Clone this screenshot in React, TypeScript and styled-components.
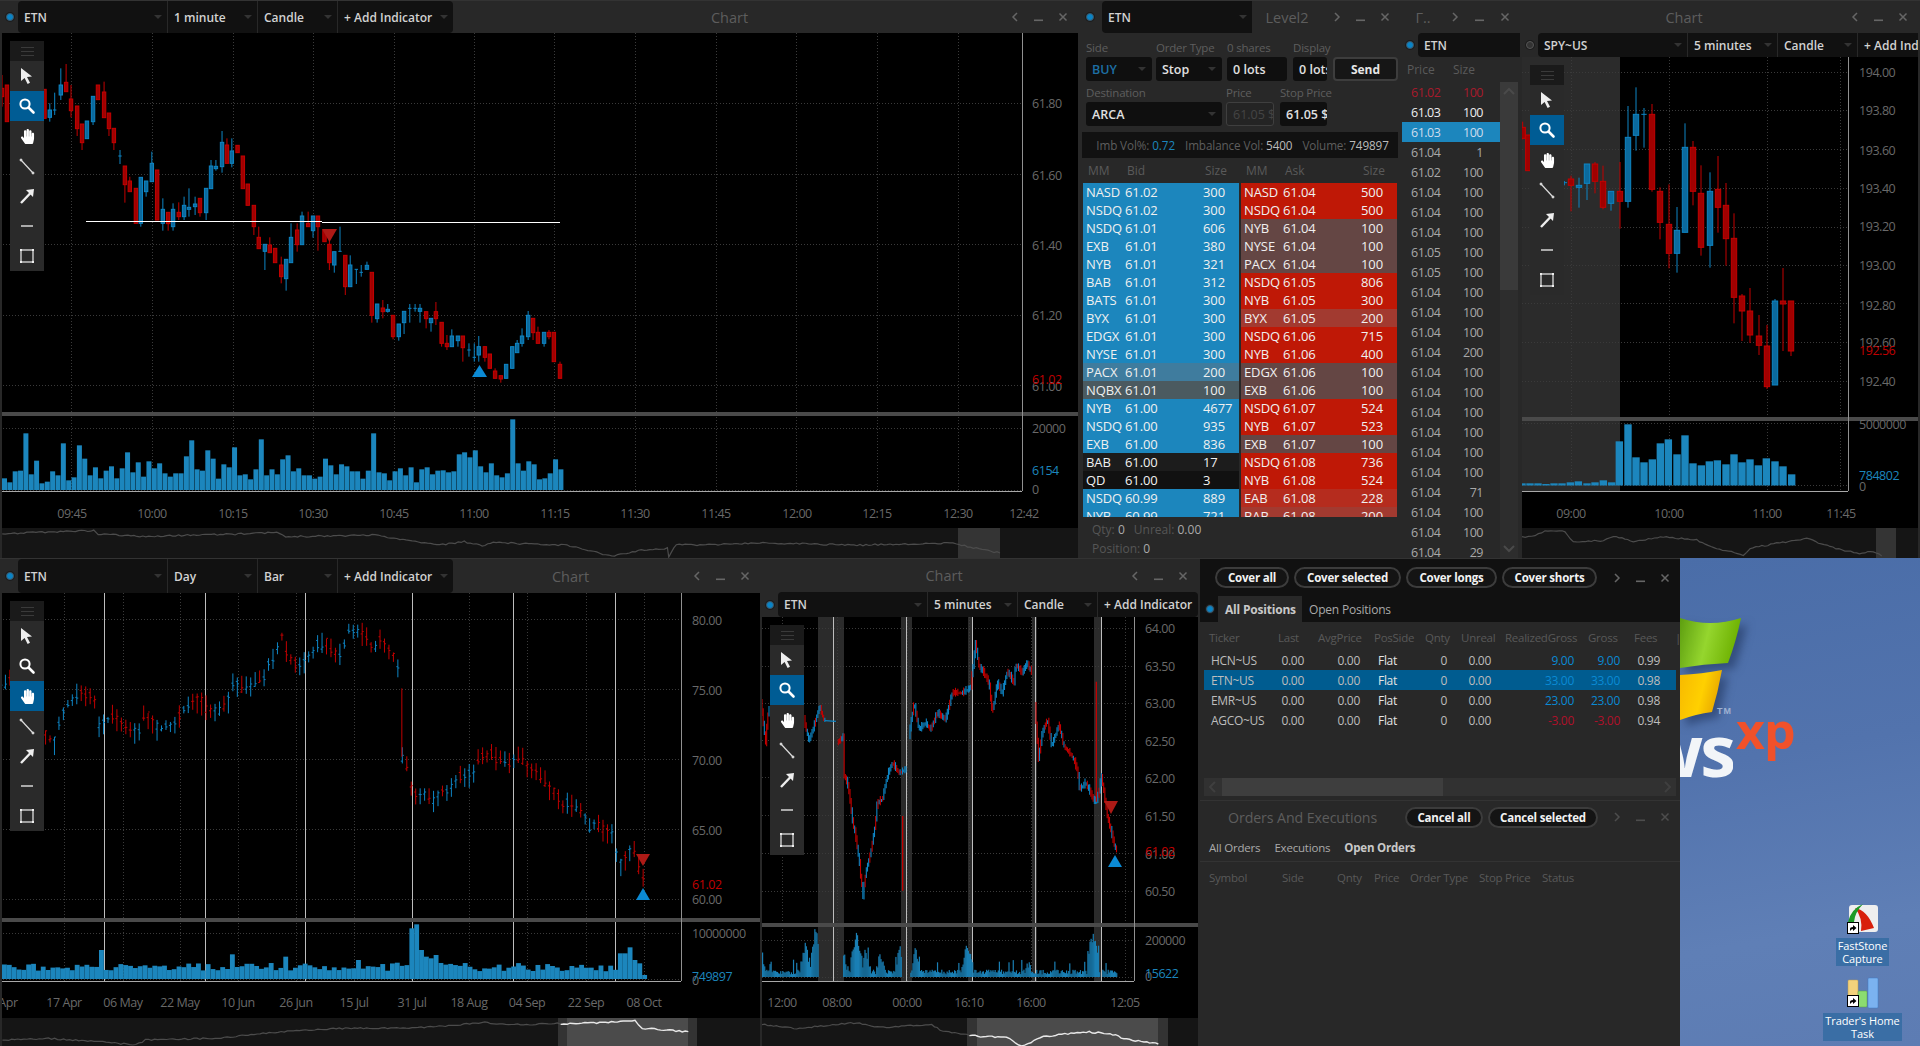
import React from "react";
import styled, { createGlobalStyle } from "styled-components";
import { FaHandPaper } from "react-icons/fa";

const BLUE = "#1c86bd";
const RED = "#bf1806";
const FONT = `"Open Sans", "Liberation Sans", sans-serif`;

const GlobalStyle = createGlobalStyle`
    html, body { margin: 0; padding: 0; background: #111; }
    body { font-family: ${FONT}; font-size: 12px; color: #ccc; }
    * { box-sizing: border-box; }
`;

/* ---------- data helpers ---------- */

const seeded = (seed: number) => () => {
    seed = (seed * 1664525 + 1013904223) % 4294967296;
    return seed / 4294967296;
};

const interp = (pts: number[][], x: number) => {
    for (let i = 1; i < pts.length; i++) {
        if (x <= pts[i][0]) {
            const [x0, y0] = pts[i - 1];
            const [x1, y1] = pts[i];
            return y0 + ((y1 - y0) * (x - x0)) / Math.max(x1 - x0, 0.001);
        }
    }
    return pts[pts.length - 1][1];
};

// adds the small noise of the navigator line
const rough = (pts: number[][]) => {
    const rnd = seeded(Math.round(pts[0][1]));
    const out: number[][] = [];
    for (let i = 1; i < pts.length; i++) {
        const [x0, y0] = pts[i - 1];
        const [x1, y1] = pts[i];
        const n = Math.max(1, Math.round(Math.abs(x1 - x0) / 3));
        for (let k = 0; k < n; k++) {
            out.push([x0 + ((x1 - x0) * k) / n, y0 + ((y1 - y0) * k) / n + (rnd() - 0.5) * 1.6]);
        }
    }
    out.push(pts[pts.length - 1]);
    return out;
};

// colour, x, body top, body bottom, wick top, wick bottom (zoomed coords)
type Candle = [string, number, number, number, number, number];

const etnCandles: Candle[] = [
    ["r", 5, 265, 290, 225, 320], ["r", 17, 255, 365, 255, 365], ["r", 109, 268, 355, 268, 355],
    ["b", 122, 330, 352, 310, 365], ["b", 134, 330, 330, 278, 345], ["b", 149, 255, 285, 205, 300],
    ["r", 162, 247, 275, 192, 275], ["r", 174, 297, 332, 255, 352], ["r", 189, 318, 386, 318, 408],
    ["r", 201, 372, 428, 372, 450], ["b", 213, 363, 416, 363, 416], ["b", 228, 289, 365, 289, 375],
    ["r", 240, 255, 299, 255, 299], ["r", 255, 276, 353, 245, 353], ["r", 267, 339, 386, 339, 408],
    ["r", 279, 385, 428, 385, 450], ["b", 294, 468, 468, 450, 492], ["r", 306, 498, 554, 498, 608],
    ["r", 318, 543, 575, 530, 575], ["r", 333, 565, 670, 565, 670], ["b", 345, 532, 670, 532, 680],
    ["b", 358, 543, 575, 543, 590], ["b", 372, 490, 545, 455, 545], ["r", 385, 510, 660, 510, 660],
    ["b", 399, 628, 670, 595, 692], ["r", 412, 637, 671, 637, 692], ["b", 424, 628, 680, 610, 692],
    ["r", 438, 637, 650, 607, 660], ["b", 451, 616, 650, 590, 660], ["b", 463, 622, 628, 565, 650],
    ["b", 478, 612, 620, 590, 645], ["r", 490, 595, 638, 595, 650], ["b", 505, 565, 638, 565, 660],
    ["b", 517, 498, 566, 480, 566], ["b", 529, 499, 506, 480, 512], ["b", 544, 427, 500, 393, 518],
    ["r", 556, 435, 490, 415, 490], ["b", 568, 453, 490, 415, 502], ["r", 582, 436, 458, 436, 458],
    ["r", 595, 468, 566, 468, 566], ["r", 607, 552, 616, 552, 616], ["r", 622, 616, 680, 616, 705],
    ["r", 634, 712, 746, 680, 746], ["b", 649, 733, 754, 733, 810], ["r", 661, 735, 758, 712, 758],
    ["r", 674, 745, 788, 745, 788], ["r", 689, 795, 830, 770, 850], ["b", 701, 778, 836, 778, 872],
    ["b", 713, 712, 788, 670, 788], ["r", 728, 690, 734, 670, 755], ["b", 740, 648, 734, 635, 734],
    ["r", 755, 670, 680, 635, 680], ["b", 767, 648, 692, 648, 713], ["r", 779, 648, 680, 648, 752],
    ["r", 795, 690, 725, 690, 725], ["r", 807, 733, 788, 690, 810], ["b", 819, 755, 795, 755, 818],
    ["b", 833, 754, 754, 680, 755], ["r", 846, 766, 860, 766, 885], ["b", 858, 795, 860, 766, 860],
    ["b", 873, 808, 808, 808, 852], ["b", 885, 817, 817, 795, 830], ["b", 899, 796, 808, 785, 808],
    ["r", 911, 817, 946, 817, 968], ["b", 924, 912, 956, 912, 968], ["r", 938, 924, 935, 900, 955],
    ["b", 950, 928, 934, 912, 938], ["r", 963, 946, 1010, 946, 1018], ["b", 977, 972, 1010, 972, 1022],
    ["b", 990, 934, 968, 934, 1002], ["b", 1004, 925, 925, 912, 968], ["b", 1017, 925, 925, 912, 935],
    ["b", 1029, 925, 934, 912, 968], ["r", 1044, 935, 956, 935, 985], ["b", 1056, 955, 968, 955, 995],
    ["r", 1068, 935, 956, 906, 975], ["r", 1082, 967, 1030, 967, 1040], ["r", 1095, 1030, 1040, 1005, 1050],
    ["b", 1107, 1008, 1040, 988, 1040], ["b", 1122, 1008, 1022, 1008, 1040], ["r", 1134, 1008, 1043, 1008, 1085],
    ["b", 1149, 1050, 1050, 1030, 1070], ["b", 1162, 1072, 1072, 1030, 1085], ["b", 1173, 1040, 1065, 1008, 1085],
    ["r", 1188, 1040, 1072, 1040, 1085], ["r", 1200, 1062, 1105, 1062, 1105], ["r", 1213, 1113, 1135, 1105, 1135],
    ["r", 1227, 1127, 1137, 1127, 1148], ["b", 1240, 1093, 1135, 1093, 1135], ["b", 1255, 1040, 1105, 1040, 1105],
    ["b", 1267, 1030, 1058, 1020, 1058], ["b", 1279, 1008, 1030, 985, 1040], ["b", 1294, 946, 1010, 933, 1020],
    ["r", 1306, 955, 998, 955, 1020], ["r", 1318, 997, 1030, 980, 1030], ["b", 1333, 997, 1030, 997, 1040],
    ["r", 1345, 997, 1010, 990, 1018], ["r", 1357, 997, 1085, 997, 1085], ["r", 1372, 1093, 1135, 1085, 1135],
];

const etnVolume = [
    235, 247, 214, 212, 100, 223, 182, 250, 245, 214, 226, 130, 241, 232, 136, 176, 226, 202, 235, 212, 199, 235, 205,
    157, 217, 187, 230, 184, 205, 190, 220, 230, 220, 220, 169, 121, 208, 212, 151, 176, 236, 193, 202, 142, 226, 223,
    238, 208, 118, 226, 208, 223, 178, 166, 214, 205, 226, 226, 236, 230, 176, 196, 223, 193, 199, 214, 214, 236, 212,
    100, 217, 220, 241, 214, 205, 226, 202, 247, 208, 202, 223, 212, 211, 217, 214, 163, 157, 172, 151, 199, 217, 190,
    226, 232, 220, 58, 190, 212, 184, 193, 238, 235, 220, 178, 208,
];

const spyCandles: Candle[] = [
    ["r", 38, 382, 415, 365, 418], ["r", 55, 405, 512, 405, 512], ["b", 163, 548, 548, 543, 556],
    ["r", 183, 537, 556, 527, 634], ["b", 207, 556, 562, 533, 623], ["b", 231, 492, 550, 492, 600],
    ["r", 255, 492, 544, 486, 580], ["r", 279, 544, 622, 497, 628], ["b", 303, 574, 610, 574, 632],
    ["r", 330, 574, 604, 486, 686], ["b", 354, 412, 604, 318, 623], ["b", 378, 343, 406, 262, 452],
    ["b", 402, 343, 343, 324, 443], ["r", 426, 343, 568, 312, 575], ["r", 450, 574, 667, 562, 718],
    ["r", 477, 673, 760, 553, 805], ["b", 501, 691, 760, 621, 818], ["b", 525, 442, 697, 370, 697],
    ["r", 549, 442, 574, 423, 616], ["r", 573, 580, 742, 496, 767], ["b", 600, 574, 736, 517, 803],
    ["r", 624, 568, 622, 468, 698], ["r", 648, 616, 716, 549, 797], ["r", 672, 715, 892, 640, 970],
    ["r", 696, 888, 933, 882, 1023], ["r", 720, 933, 1005, 864, 1029], ["r", 747, 1008, 1036, 945, 1065],
    ["r", 771, 1038, 1160, 975, 1167], ["b", 795, 903, 1155, 897, 1155], ["r", 819, 903, 912, 804, 1053],
    ["r", 843, 903, 1053, 903, 1068],
];

const spyVolume = [
    [36, 610], [60, 610], [84, 610], [108, 612], [132, 610], [156, 610], [181, 607], [205, 604], [231, 610], [255, 607],
    [280, 601], [305, 607], [328, 484], [354, 433], [378, 532], [402, 547], [427, 538], [451, 490], [475, 478],
    [501, 523], [525, 466], [549, 550], [574, 556], [598, 544], [622, 541], [648, 553], [672, 523], [696, 547],
    [720, 538], [745, 556], [769, 535], [795, 544], [819, 559], [845, 583],
];

const dayPath = [
    [0, 385], [10, 380], [20, 360], [60, 430], [95, 530], [115, 550], [122, 490], [135, 440], [155, 410], [175, 400],
    [195, 420], [205, 510], [215, 490], [232, 470], [250, 495], [270, 510], [285, 530], [295, 470], [310, 470],
    [325, 510], [345, 500], [360, 500], [375, 460], [395, 420], [410, 425], [430, 450], [450, 455], [470, 430],
    [482, 370], [500, 385], [520, 375], [545, 350], [560, 300], [570, 280], [580, 220], [590, 270], [600, 300],
    [612, 315], [625, 310], [640, 285], [655, 260], [672, 250], [690, 280], [705, 285], [720, 210], [735, 210],
    [750, 225], [770, 270], [785, 245], [800, 270], [818, 300], [828, 385], [829, 590], [840, 620], [850, 690],
    [860, 710], [880, 700], [895, 730], [915, 690], [930, 680], [945, 650], [960, 660], [975, 640], [988, 600],
    [1000, 585], [1020, 590], [1040, 610], [1060, 600], [1075, 590], [1090, 625], [1105, 640], [1125, 670],
    [1145, 700], [1160, 735], [1180, 735], [1205, 760], [1215, 810], [1230, 790], [1250, 815], [1266, 815],
    [1272, 880], [1285, 925], [1295, 885], [1307, 870], [1320, 935], [1328, 965],
];

const fiveMinPaths = [
    [[36, 430], [50, 550], [58, 450]],
    [[165, 480], [180, 545], [195, 500], [212, 440], [225, 482]],
    [[265, 550], [285, 530], [283, 640], [298, 680], [310, 780], [320, 830], [330, 900], [342, 1010], [350, 940],
        [365, 880], [378, 800], [385, 730], [400, 720], [415, 650], [430, 610], [450, 640], [470, 630]],
    [[480, 530], [495, 430], [510, 510], [530, 490], [545, 510], [565, 460], [590, 480], [610, 400], [640, 400],
        [665, 385], [680, 250], [690, 320], [705, 340], [720, 370], [730, 460], [745, 370], [760, 400], [775, 335],
        [795, 370], [800, 315], [820, 340], [835, 310], [845, 335]],
    [[858, 430], [868, 600], [880, 520], [895, 480], [908, 560], [930, 495], [945, 560], [970, 590], [985, 630],
        [992, 690], [1010, 670], [1025, 700], [1035, 725], [1045, 720], [1058, 650], [1065, 700], [1075, 770],
        [1085, 810], [1100, 870]],
];

const path = (pts: number[][]) => pts.map(p => p.join(",")).join(" ");

/* ---------- chart drawing ---------- */

const Candles = ({ items, fx, fy, w }: { items: Candle[]; fx: (x: number) => number; fy: (y: number) => number; w: number }) => (
    <>
        {items.map(([c, x, t, b, wt, wb], i) => {
            const stroke = c === "r" ? "#c40000" : "#0e85c4";
            const fill = c === "r" ? "#a00000" : "#0b6a9e";
            const cx = fx(x);
            return (
                <g key={i}>
                    <line x1={cx} x2={cx} y1={fy(wt)} y2={fy(wb)} stroke={stroke} strokeWidth={1} />
                    {t === b ? (
                        <line x1={cx - w / 2} x2={cx + w / 2} y1={fy(t)} y2={fy(t)} stroke={stroke} strokeWidth={1} />
                    ) : (
                        <rect x={cx - w / 2} y={fy(t)} width={w} height={fy(b) - fy(t)} fill={fill} stroke={stroke} strokeWidth={1} />
                    )}
                </g>
            );
        })}
    </>
);

const Tri = ({ x, y, w, h, down }: { x: number; y: number; w: number; h: number; down?: boolean }) => (
    <polygon
        points={down ? `${x},${y} ${x + w},${y} ${x + w / 2},${y + h}` : `${x + w / 2},${y} ${x + w},${y + h} ${x},${y + h}`}
        fill={down ? "#ad1a16" : "#0b8ad4"}
    />
);

const PlotSvg = styled.svg`
    display: block;
    width: 100%;
    height: 100%;
    background: #000;

    text {
        font-family: ${FONT};
        font-size: 12.5px;
        letter-spacing: -0.45px;
        fill: #696969;
    }
`;

type Label = [number, number, string, string?];

interface PlotProps {
    box: [number, number, number, number];
    gridX: number[];
    gridY: number[];
    frameRight: number;
    divider: number;
    labels: Label[];
    times: [number, string][];
    nav: number[][];
    navSel?: [number, number];
    navGrey?: [number, number];
    navHandle?: number;
    bands?: [number, number][];
    marks?: number[];
    children?: React.ReactNode;
}

const Plot = ({ box, gridX, gridY, frameRight, divider, labels, times, nav, navSel, navGrey, navHandle = 9, bands, marks, children }: PlotProps) => {
    const [x, y, w, h] = box;
    const frameBottom = y > 500 ? 981 : 491;
    const navTop = frameBottom + 37;
    const line = rough(nav);
    return (
        <PlotSvg viewBox={`${x} ${y} ${w} ${h}`} preserveAspectRatio="none">
            {bands?.map(([a, b]) => <rect key={a} x={a} y={y} width={b - a} height={frameBottom - y} fill="#2b2b2b" />)}
            {gridX.map(g => <line key={g} x1={g + 0.5} x2={g + 0.5} y1={y} y2={frameBottom} stroke="#3a3a3a" strokeDasharray="1 2" />)}
            {gridY.map(g => <line key={g} x1={x} x2={frameRight} y1={g + 0.5} y2={g + 0.5} stroke="#3a3a3a" strokeDasharray="1 2" />)}
            {marks?.map(m => <line key={m} x1={m + 0.5} x2={m + 0.5} y1={y} y2={frameBottom} stroke="#bdbdbd" />)}
            {children}
            <rect x={x} y={divider - 2} width={w} height={4} fill="#4a4a4a" />
            <line x1={frameRight + 0.5} x2={frameRight + 0.5} y1={y} y2={frameBottom} stroke="#909090" />
            <line x1={x} x2={frameRight} y1={frameBottom + 0.5} y2={frameBottom + 0.5} stroke="#a8a8a8" />
            {labels.map(([lx, ly, t, c], i) => (
                <text key={i} x={lx} y={ly + 4.5} style={c ? { fill: c } : undefined}>{t}</text>
            ))}
            {times.map(([tx, t]) => (
                <text key={t} x={tx} y={y > 500 ? 1007 : 517.5} textAnchor="middle">{t}</text>
            ))}
            <rect x={x} y={navTop} width={w} height={30} fill="#151515" />
            {navGrey && <rect x={navGrey[0]} y={navTop} width={navGrey[1] - navGrey[0]} height={30} fill="#343434" />}
            {navSel && <rect x={navSel[0]} y={navTop} width={navSel[1] - navSel[0]} height={30} fill="#4b4b4b" />}
            {navSel && <rect x={navSel[0]} y={navTop} width={navHandle} height={30} fill="#333" />}
            {navSel && <rect x={navSel[1] - navHandle} y={navTop} width={navHandle} height={30} fill="#333" />}
            <polyline points={path(line)} fill="none" stroke="#4c4c4c" strokeWidth={1.2} />
            {navSel && (
                <polyline
                    points={path(line.filter(p => p[0] >= navSel[0] && p[0] <= navSel[1]))}
                    fill="none"
                    stroke="#e8e8e8"
                    strokeWidth={1.4}
                />
            )}
            {x === 0 && <rect x={0} y={y} width={2} height={h} fill="#282828" />}
        </PlotSvg>
    );
};

const Chart1 = () => {
    const fx = (z: number) => z / 2.45;
    const fy = (z: number) => z / 3;
    const nav = [
        [5, 402], [60, 398], [210, 392], [220, 402], [320, 410], [420, 405], [520, 403], [620, 397], [640, 410], [840, 405],
        [875, 415], [985, 435], [1040, 425], [1080, 438], [1105, 428], [1270, 435], [1370, 468], [1430, 452], [1495, 445],
        [1498, 470], [1515, 432], [1568, 435],
    ].map(([a, b]) => [a / 2.24, 400 + b / 3]);
    nav.push([760, 543], [860, 545], [950, 543], [985, 550], [1000, 553]);
    return (
        <Plot
            box={[0, 33, 1078, 525]}
            gridX={[71, 152, 233, 313, 394, 474, 554, 635, 716, 796, 877, 958]}
            gridY={[103, 174, 244, 315, 385, 428, 490]}
            frameRight={1022}
            divider={414}
            nav={nav}
            navGrey={[958, 1000]}
            labels={[
                [1032, 103, "61.80"], [1032, 175, "61.60"], [1032, 245, "61.40"], [1032, 315, "61.20"], [1032, 386, "61.00"],
                [1032, 379, "61.02", "#c00000"], [1032, 428, "20000"], [1032, 470, "6154", BLUE], [1032, 489, "0"],
            ]}
            times={[
                [72, "09:45"], [152, "10:00"], [233, "10:15"], [313, "10:30"], [394, "10:45"], [474, "11:00"], [555, "11:15"],
                [635, "11:30"], [716, "11:45"], [797, "12:00"], [877, "12:15"], [958, "12:30"], [1024, "12:42"],
            ]}
        >
            <Candles items={etnCandles} fx={fx} fy={fy} w={3.4} />
            <line x1={86} x2={322} y1={221.5} y2={221.5} stroke="#fff" strokeWidth={1.2} />
            <line x1={322} x2={560} y1={222.5} y2={222.5} stroke="#fff" strokeWidth={1.2} />
            <Tri x={322} y={229} w={15} h={13} down />
            <Tri x={472} y={365} w={15} h={12} />
            {etnVolume.map((t, i) => (
                <rect key={i} x={2 + i * 5.35} y={400 + t / 3} width={5} height={490 - 400 - t / 3} fill={BLUE} />
            ))}
        </Plot>
    );
};

const Chart2 = () => {
    const rnd = seeded(11);
    const fx = (z: number) => z / 2.063;
    const fy = (z: number) => 560 + z / 3;
    const bars: React.ReactNode[] = [];
    for (let z = 2; z <= 1328; z += 9.2) {
        const mid = interp(dayPath, z);
        const next = interp(dayPath, z + 9);
        const c = next < mid ? "#0e85c4" : "#c00000";
        const up = 8 + rnd() * 30;
        const dn = 8 + rnd() * 30;
        const open = mid - up * 0.6 + rnd() * up;
        const close = mid - dn * 0.6 + rnd() * dn;
        const x = fx(z);
        bars.push(
            <g key={z} stroke={rnd() > 0.82 ? (c === "#c00000" ? "#0e85c4" : "#c00000") : c} strokeWidth={1}>
                <line x1={x} x2={x} y1={fy(mid - up)} y2={fy(mid + dn)} />
                <line x1={x - 1.5} x2={x} y1={fy(open)} y2={fy(open)} />
                <line x1={x} x2={x + 1.5} y1={fy(close)} y2={fy(close)} />
            </g>
        );
    }
    const spikes: Record<number, number> = { 20: 1170, 47: 1183, 58: 1190, 73: 1200, 84: 1105, 85: 1093, 86: 1170, 87: 1190, 88: 1195, 89: 1185, 127: 1180, 128: 1180, 129: 1162, 130: 1200, 131: 1210, 132: 1245 };
    const vols: React.ReactNode[] = [];
    for (let i = 0; i <= 132; i++) {
        const t = spikes[i] ?? 1208 + rnd() * 26;
        vols.push(<rect key={i} x={2 + i * 4.85} y={fy(t)} width={4.85} height={979 - fy(t)} fill={BLUE} />);
    }
    const nav = [
        [5, 1440], [100, 1435], [200, 1445], [280, 1455], [300, 1440], [450, 1435], [580, 1415], [700, 1405], [850, 1405],
        [1000, 1388], [1080, 1395], [1150, 1390], [1170, 1392], [1310, 1383], [1325, 1405], [1420, 1415],
    ].map(([a, b]) => [fx(a), fy(b)]);
    return (
        <Plot
            box={[0, 593, 760, 453]}
            gridX={[64, 123, 180, 238, 296, 354, 412, 469, 527, 586, 644]}
            gridY={[619, 689, 759, 829, 899, 933, 979]}
            marks={[104, 205, 305, 412, 513, 615]}
            frameRight={681}
            divider={920}
            nav={nav}
            navSel={[558, 697]}
            labels={[
                [692, 620, "80.00"], [692, 690, "75.00"], [692, 760, "70.00"], [692, 830, "65.00"], [692, 899, "60.00"],
                [692, 884, "61.02", "#c00000"], [692, 933, "10000000"], [692, 980, "0"], [692, 976, "749897", BLUE],
            ]}
            times={[
                [8, "Apr"], [64, "17 Apr"], [123, "06 May"], [180, "22 May"], [238, "10 Jun"], [296, "26 Jun"], [354, "15 Jul"],
                [412, "31 Jul"], [469, "18 Aug"], [527, "04 Sep"], [586, "22 Sep"], [644, "08 Oct"],
            ]}
        >
            {bars}
            <line x1={fx(829)} x2={fx(829)} y1={fy(385)} y2={fy(590)} stroke="#c00000" />
            <Tri x={636} y={854} w={14} h={12} down />
            <Tri x={636} y={888} w={14} h={12} />
            {vols}
        </Plot>
    );
};

const Chart3 = () => {
    const rnd = seeded(5);
    const fx = (z: number) => 750 + z / 3;
    const fy = (z: number) => 560 + z / 3;
    const ticks: React.ReactNode[] = [];
    fiveMinPaths.forEach((seg, s) => {
        for (let z = seg[0][0]; z <= seg[seg.length - 1][0]; z += 3.5) {
            const a = interp(seg, z);
            const b = interp(seg, z + 3.5);
            const blue = b < a ? rnd() > 0.2 : rnd() > 0.7;
            const j = 3 + rnd() * 14;
            ticks.push(
                <line key={`${s}-${z}`} x1={fx(z)} x2={fx(z)} y1={fy(Math.min(a, b) - j)} y2={fy(Math.max(a, b) + j * 0.6)} stroke={blue ? "#0e85c4" : "#c40000"} strokeWidth={1.1} />
            );
        }
    });
    const peaks = [[36, 1175], [165, 1145], [198, 1105], [280, 1170], [318, 1110], [345, 1160], [390, 1165], [448, 1155], [495, 1160], [650, 1140], [835, 1185], [1027, 1110], [1095, 1222]];
    const vols: React.ReactNode[] = [];
    for (let z = 36; z <= 1100; z += 3.2) {
        if ((z > 204 && z < 276) || (z > 453 && z < 480) || (z > 1048 && z < 1054)) continue;
        let t = 1243 - rnd() * 14;
        peaks.forEach(([p, v]) => {
            const d = Math.abs(p - z);
            if (d < 18) t = Math.min(t, v + d * 4 + rnd() * 30);
        });
        if (rnd() > 0.95) t -= 30;
        vols.push(<rect key={z} x={fx(z)} y={fy(t)} width={1.2} height={977 - fy(t)} fill="#1a7fb4" />);
    }
    const nav = [
        [36, 1393], [140, 1405], [320, 1388], [400, 1403], [545, 1393], [570, 1410], [650, 1425], [700, 1430], [770, 1432],
        [815, 1458], [880, 1430], [1000, 1415], [1080, 1420], [1130, 1438], [1225, 1452],
    ].map(([a, b]) => [fx(a), fy(b)]);
    return (
        <Plot
            box={[762, 617, 436, 429]}
            gridX={[782, 837, 907, 969, 1031, 1125]}
            gridY={[628, 666, 703, 740, 777, 815, 853, 891, 940, 977]}
            bands={[[818, 844], [901, 912], [968, 973], [1032, 1037], [1094, 1102]]}
            marks={[833, 906, 972, 1035, 1101]}
            frameRight={1134}
            divider={925}
            nav={nav}
            navSel={[967, 1168]}
            navHandle={10}
            labels={[
                [1145, 628, "64.00"], [1145, 666, "63.50"], [1145, 703, "63.00"], [1145, 741, "62.50"], [1145, 778, "62.00"],
                [1145, 816, "61.50"], [1145, 854, "61.00"], [1145, 851, "61.02", "#c00000"], [1145, 891, "60.50"],
                [1145, 940, "200000"], [1145, 976, "0"], [1145, 973, "15622", BLUE],
            ]}
            times={[[782, "12:00"], [837, "08:00"], [907, "00:00"], [969, "16:10"], [1031, "16:00"], [1125, "12:05"]]}
        >
            {ticks}
            <line x1={fx(458)} x2={fx(458)} y1={fy(768)} y2={fy(992)} stroke="#c40000" strokeWidth={1.3} />
            <line x1={fx(1039)} x2={fx(1039)} y1={fy(365)} y2={fy(725)} stroke="#c40000" strokeWidth={1.3} />
            <line x1={fx(225)} x2={fx(258)} y1={fy(482)} y2={fy(484)} stroke="#0e85c4" strokeWidth={1.2} />
            <Tri x={1104} y={801} w={14} h={13} down />
            <Tri x={1108} y={855} w={14} h={12} />
            {vols}
        </Plot>
    );
};

const Chart4 = () => {
    const fx = (z: number) => 1510 + z / 3;
    const fy = (z: number) => z / 3;
    const nav = [
        [36, 770], [75, 768], [105, 752], [165, 755], [190, 785], [280, 782], [310, 768], [370, 785], [460, 770], [560, 780],
        [620, 805], [700, 825], [720, 805], [800, 790], [890, 775], [960, 800], [1040, 820], [1090, 815], [1115, 828],
    ].map(([a, b]) => [fx(a), 280 + b / 3]);
    return (
        <Plot
            box={[1522, 57, 396, 501]}
            gridX={[1571, 1669, 1767, 1840]}
            gridY={[72, 110, 149, 188, 227, 265, 303, 342, 381, 423, 485]}
            bands={[[1522, 1620]]}
            frameRight={1848}
            divider={419}
            nav={nav}
            navGrey={[1876, 1896]}
            labels={[
                [1859, 72, "194.00"], [1859, 110, "193.80"], [1859, 150, "193.60"], [1859, 188, "193.40"], [1859, 226, "193.20"],
                [1859, 265, "193.00"], [1859, 305, "192.80"], [1859, 342, "192.60"], [1859, 350, "192.56", "#c00000"], [1859, 381, "192.40"],
                [1859, 424, "5000000"], [1859, 475, "784802", BLUE], [1859, 486, "0"],
            ]}
            times={[[1571, "09:00"], [1669, "10:00"], [1767, "11:00"], [1841, "11:45"]]}
        >
            <Candles items={spyCandles} fx={fx} fy={fy} w={5.4} />
            {spyVolume.map(([z, t]) => {
                const top = 280 + t / 3;
                return <rect key={z} x={fx(z) - 3.7} y={top} width={7.4} height={485.5 - top} fill={BLUE} />;
            })}
        </Plot>
    );
};

/* ---------- chrome ---------- */

const Page = styled.div`
    width: 1920px;
    height: 1046px;
    display: flex;
    flex-direction: column;
    overflow: hidden;
    background: #111;
`;

const Row = styled.div<{ $h: number }>`
    display: flex;
    height: ${p => p.$h}px;
`;

const Win = styled.section<{ $w: number; $pad?: number }>`
    width: ${p => p.$w}px;
    height: 100%;
    display: flex;
    flex-direction: column;
    background: #282828;
    border-top: 1px solid #333;
    padding: 0 ${p => p.$pad ?? 0}px;
    overflow: hidden;
`;

const TitleBar = styled.div<{ $h?: number }>`
    height: ${p => p.$h ?? 32}px;
    flex: none;
    display: flex;
    align-items: center;
`;

const Dot = styled.span<{ $off?: boolean; $ml?: number; $mr?: number }>`
    flex: none;
    align-self: center;
    width: 8px;
    height: 8px;
    margin: 0 ${p => p.$mr ?? 4}px 0 ${p => p.$ml ?? 6}px;
    border-radius: 50%;
    border: 1.5px solid ${p => (p.$off ? "#555" : "#3c5566")};
    background: ${p => (p.$off ? "#333" : "#0a84c6")};
    box-shadow: 0 0 0 1px #1c1c1c;
`;

const PillGroup = styled.div<{ $clip?: boolean }>`
    display: flex;
    height: 100%;
    gap: 1px;
    flex: ${p => (p.$clip ? 1 : "none")};
    overflow: hidden;
`;

const Pill = styled.div<{ $w: number; $first?: boolean; $last?: boolean; $bare?: boolean }>`
    width: ${p => p.$w}px;
    flex: none;
    display: flex;
    align-items: center;
    justify-content: space-between;
    padding: 0 5px 0 6px;
    background: #111;
    color: #d2d2d2;
    font-weight: 600;
    font-size: 12px;
    white-space: nowrap;
    overflow: hidden;
    border-radius: ${p => (p.$first ? "4px 0 0 4px" : p.$last ? "0 4px 4px 0" : "0")};

    ${p => !p.$bare && `
        &::after {
            content: "";
            flex: none;
            border-left: 4px solid transparent;
            border-right: 4px solid transparent;
            border-top: 4px solid #333;
        }
    `}
`;

const Title = styled.div<{ $shift?: number }>`
    flex: 1;
    padding-right: ${p => p.$shift ?? 0}px;
    text-align: center;
    color: #5d5d5d;
    font-size: 14.5px;
    white-space: nowrap;
`;

const Controls = styled.div<{ $w: number; $dim?: boolean }>`
    flex: none;
    width: ${p => p.$w}px;
    display: flex;
    align-items: center;
    justify-content: space-between;
    padding: 0 10px 0 5px;
    color: ${p => (p.$dim ? "#4d4d4d" : "#666")};
`;

const WinControls = ({ dir = "left", w = 72, dim }: { dir?: "left" | "right"; w?: number; dim?: boolean }) => (
    <Controls $w={w} $dim={dim}>
        <svg width="8" height="10" viewBox="0 0 8 10" fill="none" stroke="currentColor" strokeWidth="1.5">
            <path d={dir === "left" ? "M6 1 L2 5 L6 9" : "M2 1 L6 5 L2 9"} />
        </svg>
        <svg width="9" height="10" viewBox="0 0 9 10" fill="currentColor"><rect x="0" y="7.5" width="9" height="1.6" /></svg>
        <svg width="10" height="10" viewBox="0 0 10 10" stroke="currentColor" strokeWidth="1.5"><path d="M1.5 1.5 L8.5 8.5 M8.5 1.5 L1.5 8.5" /></svg>
    </Controls>
);

const Body = styled.div`
    flex: 1;
    position: relative;
    min-height: 0;
`;

const ToolBox = styled.div<{ $left: number }>`
    position: absolute;
    top: 8px;
    left: ${p => p.$left}px;
    width: 34px;
    background: #2a2a2a;
`;

const ToolHandle = styled.div`
    height: 20px;
    background: #1a1a1a;
    display: flex;
    align-items: center;
    justify-content: center;

    &::before {
        content: "";
        width: 13px;
        height: 7px;
        border-top: 1px solid #3a3a3a;
        border-bottom: 1px solid #3a3a3a;
        background: linear-gradient(#3a3a3a, #3a3a3a) center / 100% 1px no-repeat;
    }
`;

const ToolBtn = styled.div<{ $on?: boolean }>`
    height: 30px;
    display: flex;
    align-items: center;
    justify-content: center;
    background: ${p => (p.$on ? "#005c94" : "transparent")};
    color: #fff;
`;

const toolIcons = [
    <svg key="a" width="16" height="18" viewBox="0 0 16 18" fill="#eee"><path d="M2 1 L2 14 L5.6 11 L8.6 17 L11 15.8 L8 10 L13 9.6 Z" /></svg>,
    <svg key="s" width="18" height="18" viewBox="0 0 18 18" fill="none" stroke="#fff"><circle cx="7" cy="7" r="4.6" strokeWidth="2" /><path d="M10.5 10.5 L15.5 15.5" strokeWidth="2.6" strokeLinecap="round" /></svg>,
    <FaHandPaper key="h" size={15} color="#fff" />,
    <svg key="l" width="18" height="18" viewBox="0 0 18 18" stroke="#ddd" fill="#ddd"><path d="M3 3 L15 16" strokeWidth="1.2" /><circle cx="3" cy="3" r="1" /><circle cx="15" cy="16" r="1" /></svg>,
    <svg key="r" width="18" height="18" viewBox="0 0 18 18" fill="#eee"><path d="M3 16 L13 5.5" stroke="#eee" strokeWidth="2.4" /><path d="M8 3 L16 2 L15 10 Z" /></svg>,
    <svg key="m" width="18" height="6" viewBox="0 0 18 6"><rect x="3" y="2" width="12" height="2" fill="#aaa" /></svg>,
    <svg key="q" width="18" height="18" viewBox="0 0 18 18" fill="#eee"><rect x="3" y="3" width="12" height="12" fill="none" stroke="#eee" strokeWidth="1.2" /><rect x="2" y="2" width="2" height="2" /><rect x="14" y="2" width="2" height="2" /><rect x="2" y="14" width="2" height="2" /><rect x="14" y="14" width="2" height="2" /></svg>,
];

const Toolbar = ({ active, left }: { active: number; left: number }) => (
    <ToolBox $left={left}>
        <ToolHandle />
        {toolIcons.map((icon, i) => <ToolBtn key={i} $on={i === active}>{icon}</ToolBtn>)}
    </ToolBox>
);

const Pills = ({ items, widths, clip, bareLast }: { items: string[]; widths: number[]; clip?: boolean; bareLast?: boolean }) => (
    <PillGroup $clip={clip}>
        {items.map((t, i) => (
            <Pill key={t} $w={widths[i]} $first={i === 0} $last={i === items.length - 1} $bare={bareLast && i === items.length - 1}>{t}</Pill>
        ))}
    </PillGroup>
);

/* ---------- level 2 ---------- */

const Form = styled.div`
    flex: none;
    padding: 6px 0 0 8px;
`;

const FormRow = styled.div<{ $mt?: number }>`
    display: flex;
    margin-top: ${p => p.$mt ?? 0}px;
`;

const Field = styled.div<{ $w: number; $mr?: number }>`
    width: ${p => p.$w}px;
    margin-right: ${p => p.$mr ?? 0}px;
    flex: none;
`;

const FieldLabel = styled.div`
    height: 18px;
    line-height: 18px;
    font-size: 11.5px;
    letter-spacing: -0.2px;
    color: #5e5e5e;
    white-space: nowrap;
`;

const Control = styled.div<{ $color?: string; $off?: boolean; $caret?: boolean }>`
    height: 24px;
    display: flex;
    align-items: center;
    justify-content: space-between;
    padding: 0 6px;
    background: ${p => (p.$off ? "#242424" : "#0f0f0f")};
    border: ${p => (p.$off ? "1px solid #3f3f3f" : "none")};
    border-radius: 3px;
    color: ${p => p.$color ?? (p.$off ? "#444" : "#e0e0e0")};
    font-weight: ${p => (p.$off ? 400 : 600)};
    font-size: 12.5px;
    white-space: nowrap;
    overflow: hidden;

    ${p => p.$caret && `
        &::after {
            content: "";
            border-left: 4px solid transparent;
            border-right: 4px solid transparent;
            border-top: 4px solid #333;
        }
    `}
`;

const SendBtn = styled.div`
    height: 24px;
    display: flex;
    align-items: center;
    justify-content: center;
    border: 2px solid #3d3d3d;
    border-radius: 4px;
    background: #161616;
    color: #e6e6e6;
    font-weight: 700;
    font-size: 12px;
`;

const StatBar = styled.div`
    margin: 6px 2px 0 4px;
    height: 26px;
    display: flex;
    align-items: center;
    justify-content: center;
    gap: 10px;
    padding-left: 5px;
    background: #111;
    color: #5e5e5e;
    font-size: 11.7px;
    letter-spacing: -0.1px;

    b { font-weight: 400; color: #bbb; }
    i { font-style: normal; color: ${BLUE}; }
`;

const BookHead = styled.div`
    height: 25px;
    flex: none;
    margin-left: 10px;
    display: grid;
    grid-template-columns: 39px 78px 41px 39px 78px 40px;
    align-items: center;
    color: #5a5a5a;
    font-size: 12px;
`;

const BookCols = styled.div`
    flex: none;
    height: 334px;
    margin-left: 5px;
    display: flex;
    gap: 2px;
    overflow: hidden;
`;

const BookCol = styled.div`
    width: 156px;
`;

const BookRow = styled.div<{ $bg: string }>`
    height: 18px;
    line-height: 18px;
    display: grid;
    grid-template-columns: 39px 78px 39px;
    padding-left: 3px;
    background: ${p => p.$bg};
    color: #f0f0f0;
    font-size: 13px;
    letter-spacing: -0.1px;
    white-space: nowrap;
`;

const Footer = styled.div`
    padding: 3px 0 0 14px;
    font-size: 12px;
    color: #565656;
    line-height: 19px;

    b { font-weight: 400; color: #aaa; }
    span { margin-right: 9px; }
`;

const BROWN = "#644644";
const bids: [string, string, string, string?][] = [
    ["NASD", "61.02", "300"], ["NSDQ", "61.02", "300"], ["NSDQ", "61.01", "606"], ["EXB", "61.01", "380"], ["NYB", "61.01", "321"],
    ["BAB", "61.01", "312"], ["BATS", "61.01", "300"], ["BYX", "61.01", "300"], ["EDGX", "61.01", "300"], ["NYSE", "61.01", "300"],
    ["PACX", "61.01", "200", "#3f7c9e"], ["NQBX", "61.01", "100", "#4b5a60"], ["NYB", "61.00", "4677"], ["NSDQ", "61.00", "935"],
    ["EXB", "61.00", "836"], ["BAB", "61.00", "17", "#1c1c1c"], ["QD", "61.00", "3", "#111"], ["NSDQ", "60.99", "889"], ["NYB", "60.99", "721"],
];
const asks: [string, string, string, string?][] = [
    ["NASD", "61.04", "500"], ["NSDQ", "61.04", "500"], ["NYB", "61.04", "100", BROWN], ["NYSE", "61.04", "100", BROWN], ["PACX", "61.04", "100", BROWN],
    ["NSDQ", "61.05", "806"], ["NYB", "61.05", "300"], ["BYX", "61.05", "200", "#a23a30"], ["NSDQ", "61.06", "715"], ["NYB", "61.06", "400"],
    ["EDGX", "61.06", "100", BROWN], ["EXB", "61.06", "100", BROWN], ["NSDQ", "61.07", "524"], ["NYB", "61.07", "523"], ["EXB", "61.07", "100", BROWN],
    ["NSDQ", "61.08", "736"], ["NYB", "61.08", "524"], ["EAB", "61.08", "228", "#b52c1e"], ["BAB", "61.08", "200", "#a23a30"],
];

const Level2Window = () => (
    <Win $w={322}>
        <TitleBar>
            <Dot $ml={8} $mr={8} />
            <PillGroup><Pill $w={150} $first $last>ETN</Pill></PillGroup>
            <Title $shift={6}>Level2</Title>
            <WinControls dir="right" />
        </TitleBar>
        <Form>
            <FormRow>
                <Field $w={66} $mr={4}><FieldLabel>Side</FieldLabel><Control $color="#1d6fa5" $caret>BUY</Control></Field>
                <Field $w={66} $mr={5}><FieldLabel>Order Type</FieldLabel><Control $caret>Stop</Control></Field>
                <Field $w={60} $mr={6}><FieldLabel>0 shares</FieldLabel><Control>0 lots</Control></Field>
                <Field $w={34} $mr={6}><FieldLabel>Display</FieldLabel><Control>0 lots</Control></Field>
                <Field $w={65}><FieldLabel /><SendBtn>Send</SendBtn></Field>
            </FormRow>
            <FormRow $mt={3}>
                <Field $w={136} $mr={4}><FieldLabel>Destination</FieldLabel><Control $caret>ARCA</Control></Field>
                <Field $w={48} $mr={6}><FieldLabel>Price</FieldLabel><Control $off>61.05 $</Control></Field>
                <Field $w={47}><FieldLabel>Stop Price</FieldLabel><Control>61.05 $</Control></Field>
            </FormRow>
        </Form>
        <StatBar>
            <span>Imb Vol%: <i>0.72</i></span>
            <span>Imbalance Vol: <b>5400</b></span>
            <span>Volume: <b>749897</b></span>
        </StatBar>
        <BookHead>
            <span>MM</span><span>Bid</span><span>Size</span><span>MM</span><span>Ask</span><span>Size</span>
        </BookHead>
        <BookCols>
            <BookCol>
                {bids.map(([m, p, s, bg], i) => (
                    <BookRow key={i} $bg={bg ?? BLUE}><span>{m}</span><span>{p}</span><span>{s}</span></BookRow>
                ))}
            </BookCol>
            <BookCol>
                {asks.map(([m, p, s, bg], i) => (
                    <BookRow key={i} $bg={bg ?? RED}><span>{m}</span><span>{p}</span><span>{s}</span></BookRow>
                ))}
            </BookCol>
        </BookCols>
        <Footer>
            <div><span>Qty: <b>0</b></span><span>Unreal: <b>0.00</b></span></div>
            <div>Position: <b>0</b></div>
        </Footer>
    </Win>
);

/* ---------- time and sales ---------- */

const TsHead = styled.div`
    height: 25px;
    flex: none;
    display: flex;
    align-items: center;
    padding-left: 7px;
    color: #5a5a5a;
    font-size: 12px;

    span:first-child { width: 46px; }
`;

const TsWrap = styled.div`
    flex: 1;
    display: flex;
    min-height: 0;
`;

const TsList = styled.div`
    width: 98px;
    margin-left: 2px;
    overflow: hidden;
`;

const TsRow = styled.div<{ $sel?: boolean; $color: string }>`
    height: 20px;
    display: flex;
    align-items: center;
    justify-content: space-between;
    padding: 0 17px 0 9px;
    background: ${p => (p.$sel ? BLUE : "transparent")};
    color: ${p => p.$color};
    font-size: 12.5px;
    letter-spacing: -0.5px;
`;

const Scroll = styled.div`
    width: 18px;
    height: 476px;
    display: flex;
    flex-direction: column;
    justify-content: space-between;
    background: linear-gradient(#3a3a3a, #3a3a3a) top / 100% 208px no-repeat #2d2d2d;
`;

const ScrollEnd = styled.div`
    height: 18px;
    display: flex;
    align-items: center;
    justify-content: center;
    color: #4a4a4a;
`;

const tsRows = Array.from({ length: 24 }, (_, i) => {
    const prices: Record<number, string> = { 0: "61.02", 1: "61.03", 2: "61.03", 4: "61.02", 8: "61.05", 9: "61.05" };
    const sizes: Record<number, string> = { 3: "1", 13: "200", 20: "71", 23: "29" };
    return { price: prices[i] ?? "61.04", size: sizes[i] ?? "100", i };
});

const TimeSales = () => (
    <Win $w={120}>
        <TitleBar>
            <Title>Γ..</Title>
            <WinControls dir="right" w={74} />
        </TitleBar>
        <TitleBar $h={24}>
            <Dot $ml={6} $mr={4} />
            <PillGroup $clip><Pill $w={110} $first $bare>ETN</Pill></PillGroup>
        </TitleBar>
        <TsHead><span>Price</span><span>Size</span></TsHead>
        <TsWrap>
            <TsList>
                {tsRows.map(r => (
                    <TsRow key={r.i} $sel={r.i === 2} $color={r.i === 0 ? "#a81a2c" : r.i === 1 ? "#eee" : r.i === 2 ? "#cde" : "#a8a8a8"}>
                        <span>{r.price}</span><span>{r.size}</span>
                    </TsRow>
                ))}
            </TsList>
            <Scroll>
                <ScrollEnd><svg width="12" height="8" viewBox="0 0 12 8" fill="none" stroke="currentColor" strokeWidth="2"><path d="M1 7 L6 2 L11 7" /></svg></ScrollEnd>
                <ScrollEnd><svg width="12" height="8" viewBox="0 0 12 8" fill="none" stroke="currentColor" strokeWidth="2"><path d="M1 1 L6 6 L11 1" /></svg></ScrollEnd>
            </Scroll>
        </TsWrap>
    </Win>
);

/* ---------- positions and orders ---------- */

const DarkBar = styled.div`
    height: 37px;
    flex: none;
    display: flex;
    align-items: center;
    padding-left: 15px;
    gap: 5px;
    background: #111;
`;

const RoundBtn = styled.div<{ $w: number }>`
    width: ${p => p.$w}px;
    height: 21px;
    flex: none;
    display: flex;
    align-items: center;
    justify-content: center;
    border: 2px solid #3c3c3c;
    border-radius: 11px;
    background: #141414;
    color: #f2f2f2;
    font-size: 11.5px;
    font-weight: 700;
    letter-spacing: -0.2px;
    white-space: nowrap;
`;

const Grow = styled.div`
    flex: 1;
`;

const TabRow = styled.div`
    height: 26px;
    flex: none;
    display: flex;
    align-items: stretch;
    background: #111;
`;

const Tab = styled.div<{ $on?: boolean; $w?: number }>`
    width: ${p => (p.$w ? `${p.$w}px` : "auto")};
    display: flex;
    align-items: center;
    padding-left: 7px;
    background: ${p => (p.$on ? "#282828" : "transparent")};
    color: ${p => (p.$on ? "#c8c8c8" : "#aaa")};
    font-weight: ${p => (p.$on ? 700 : 400)};
    font-size: 12px;
    letter-spacing: -0.2px;
`;

const PosPanel = styled.div`
    flex: none;
    height: 177px;
    margin: 0 2px;
    display: flex;
    flex-direction: column;
    background: #282828;
`;

const PosHead = styled.div`
    height: 28px;
    flex: none;
    padding-top: 2px;
    margin-left: 7px;
    display: grid;
    grid-template-columns: 69px 40px 56px 51px 36px 44px 83px 46px 41px 8px;
    align-items: center;
    color: #595959;
    font-size: 11.5px;
    letter-spacing: -0.25px;
    white-space: nowrap;
`;

const PosRow = styled.div<{ $sel?: boolean }>`
    height: 20px;
    flex: none;
    margin: 0 2px;
    padding-left: 7px;
    display: grid;
    grid-template-columns: 65px 28px 56px 60px 27px 44px 83px 46px 40px;
    align-items: center;
    background: ${p => (p.$sel ? "#005c90" : "transparent")};
    color: #bdbdbd;
    font-size: 12px;
    letter-spacing: -0.3px;
`;

const Num = styled.span<{ $color?: string }>`
    text-align: right;
    color: ${p => p.$color ?? "inherit"};
`;

const FlatCell = styled.span`
    padding-left: 18px;
    color: #e4e4e4;
`;

const HScroll = styled.div`
    height: 18px;
    margin: auto 2px 3px;
    display: flex;
    align-items: center;
    justify-content: space-between;
    padding: 0 4px;
    color: #3f3f3f;
    background: linear-gradient(#3e3e3e, #3e3e3e) 18px 0 / 221px 100% no-repeat #313131;
`;

const positions = [
    { t: "HCN~US", r: "9.00", g: "9.00", f: "0.99", c: "#0a8ad4" },
    { t: "ETN~US", r: "33.00", g: "33.00", f: "0.98", c: "#0a8ad4", sel: true },
    { t: "EMR~US", r: "23.00", g: "23.00", f: "0.98", c: "#0a8ad4" },
    { t: "AGCO~US", r: "-3.00", g: "-3.00", f: "0.94", c: "#b0102a" },
];

const OrdersPanel = styled.div`
    flex: 1;
    margin-top: 1px;
    border-top: 1px solid #333;
    display: flex;
    flex-direction: column;
    background: #282828;
`;

const OrdersBar = styled.div`
    height: 32px;
    flex: none;
    display: flex;
    align-items: center;
    padding-left: 28px;
    gap: 5px;
`;

const OrdersTitle = styled.div`
    width: 172px;
    color: #5d5d5d;
    font-size: 14.2px;
    letter-spacing: -0.1px;
    white-space: nowrap;
`;

const OrderTabs = styled.div`
    height: 29px;
    flex: none;
    display: flex;
    align-items: center;
    padding-left: 9px;
    gap: 14px;
    border-bottom: 1px solid #333;
    font-size: 11.5px;
    letter-spacing: -0.2px;
    color: #aaa;

    b { color: #c8c8c8; }
`;

const OrderHead = styled.div`
    height: 30px;
    display: grid;
    padding-left: 9px;
    grid-template-columns: 73px 55px 37px 36px 69px 63px 60px;
    align-items: center;
    color: #595959;
    font-size: 11.5px;
    letter-spacing: -0.25px;
    white-space: nowrap;
`;

const Positions = () => (
    <Win $w={480}>
        <DarkBar>
            <RoundBtn $w={74}>Cover all</RoundBtn>
            <RoundBtn $w={107}>Cover selected</RoundBtn>
            <RoundBtn $w={91}>Cover longs</RoundBtn>
            <RoundBtn $w={95}>Cover shorts</RoundBtn>
            <Grow />
            <WinControls dir="right" w={72} />
        </DarkBar>
        <TabRow>
            <Dot $ml={6} $mr={4} />
            <Tab $on $w={84}>All Positions</Tab>
            <Tab>Open Positions</Tab>
        </TabRow>
        <PosPanel>
            <PosHead>
                <span>Ticker</span><span>Last</span><span>AvgPrice</span><span>PosSide</span><span>Qnty</span><span>Unreal</span>
                <span>RealizedGross</span><span>Gross</span><span>Fees</span><span>|</span>
            </PosHead>
            {positions.map(p => (
                <PosRow key={p.t} $sel={p.sel}>
                    <span>{p.t}</span><Num>0.00</Num><Num>0.00</Num><FlatCell>Flat</FlatCell><Num>0</Num><Num>0.00</Num>
                    <Num $color={p.c}>{p.r}</Num><Num $color={p.c}>{p.g}</Num><Num>{p.f}</Num>
                </PosRow>
            ))}
            <HScroll>
                <svg width="8" height="12" viewBox="0 0 8 12" fill="none" stroke="currentColor" strokeWidth="2"><path d="M7 1 L2 6 L7 11" /></svg>
                <svg width="8" height="12" viewBox="0 0 8 12" fill="none" stroke="currentColor" strokeWidth="2"><path d="M1 1 L6 6 L1 11" /></svg>
            </HScroll>
        </PosPanel>
        <OrdersPanel>
            <OrdersBar>
                <OrdersTitle>Orders And Executions</OrdersTitle>
                <RoundBtn $w={78}>Cancel all</RoundBtn>
                <RoundBtn $w={110}>Cancel selected</RoundBtn>
                <Grow />
                <WinControls dir="right" w={72} dim />
            </OrdersBar>
            <OrderTabs><span>All Orders</span><span>Executions</span><b>Open Orders</b></OrderTabs>
            <OrderHead>
                <span>Symbol</span><span>Side</span><span>Qnty</span><span>Price</span><span>Order Type</span><span>Stop Price</span><span>Status</span>
            </OrderHead>
        </OrdersPanel>
    </Win>
);

/* ---------- desktop ---------- */

const Desktop = styled.div`
    position: relative;
    flex: 1;
    height: 100%;
    overflow: hidden;
    background: linear-gradient(170deg, #4a6da8 0%, #5273ad 40%, #5f7fb6 75%, #5d7cb3 100%);
`;

const Flag = styled.svg`
    position: absolute;
    left: 0;
    top: 60px;
    filter: drop-shadow(6px 6px 4px rgba(30, 50, 90, 0.55));
`;

const WsText = styled.div`
    position: absolute;
    left: 0;
    top: 156px;
    width: 53px;
    height: 70px;
    overflow: hidden;
    direction: rtl;
    color: #f2f5f8;
    font: 700 72px/70px "Open Sans", sans-serif;
    letter-spacing: -3px;
    filter: blur(0.5px);
`;

const XpText = styled.div`
    position: absolute;
    left: 56px;
    top: 142px;
    color: #f0512a;
    font: 700 50px/60px "Open Sans", sans-serif;
    letter-spacing: -1px;
`;

const TmText = styled.div`
    position: absolute;
    left: 37px;
    top: 147px;
    color: #9fb2d2;
    font: 700 9px/12px "Liberation Sans", sans-serif;
    letter-spacing: 1px;
`;

const DeskIcon = styled.div<{ $top: number }>`
    position: absolute;
    left: 146px;
    top: ${p => p.$top}px;
    width: 73px;
    display: flex;
    flex-direction: column;
    align-items: center;
`;

const IconCaption = styled.div`
    margin-top: 4px;
    padding: 1px 2px;
    background: #3a6ea5;
    color: #fff;
    font: 11px/13px "Open Sans", "Liberation Sans", sans-serif;
    letter-spacing: -0.1px;
    text-align: center;
    white-space: nowrap;
`;

const Shortcut = () => (
    <g>
        <rect x="0.5" y="18.5" width="11" height="11" fill="#fff" stroke="#000" />
        <path d="M3 27 L3 25 Q3 23 6 23 L6 21 L9.5 24 L6 27 L6 25 Q4.5 25 3 27 Z" fill="#000" />
    </g>
);

const DesktopArea = () => (
    <Desktop>
        <Flag width="64" height="112" viewBox="0 0 64 112">
            <defs>
                <linearGradient id="grn" x1="0" x2="1" y1="0" y2="0.2">
                    <stop offset="0" stopColor="#5d9e10" />
                    <stop offset="0.5" stopColor="#95d62e" />
                    <stop offset="1" stopColor="#6db000" />
                </linearGradient>
                <linearGradient id="ylw" x1="0" x2="1" y1="0" y2="0.3">
                    <stop offset="0" stopColor="#f7b900" />
                    <stop offset="0.6" stopColor="#ffd000" />
                    <stop offset="1" stopColor="#e8a800" />
                </linearGradient>
            </defs>
            <path d="M0 0 Q30 10 61 0 Q56 24 48 45 Q24 46 0 50 Z" fill="url(#grn)" />
            <path d="M0 57 Q22 56 42 52 Q38 74 32 94 Q16 96 0 102 Z" fill="url(#ylw)" />
        </Flag>
        <TmText>TM</TmText>
        <WsText>ws</WsText>
        <XpText>xp</XpText>
        <DeskIcon $top={346}>
            <svg width="32" height="30" viewBox="0 0 32 30">
                <rect x="2" y="1" width="29" height="27" rx="3" fill="#eee" />
                <path d="M8 4 Q20 6 27 24 L14 27 Q16 14 8 4 Z" fill="#d8200c" />
                <path d="M1 18 Q4 5 16 0 Q8 8 7 18 Z" fill="#1c9a26" />
                <Shortcut />
            </svg>
            <IconCaption>FastStone<br />Capture</IconCaption>
        </DeskIcon>
        <DeskIcon $top={419}>
            <svg width="32" height="32" viewBox="0 0 32 32">
                <rect x="1" y="3" width="10" height="20" rx="1" fill="#f3d27c" stroke="#b89a50" strokeWidth=".5" />
                <rect x="11" y="14" width="9" height="16" rx="1" fill="#8bdc70" stroke="#5aa040" strokeWidth=".5" />
                <rect x="21" y="1" width="10" height="30" rx="1" fill="#7bb2f0" stroke="#3d78c4" strokeWidth=".5" />
                <Shortcut />
            </svg>
            <IconCaption>Trader's Home<br />Task</IconCaption>
        </DeskIcon>
    </Desktop>
);

export default function App() {
    return (
        <Page>
            <GlobalStyle />
            <Row $h={558}>
                <Win $w={1078}>
                    <TitleBar>
                        <Dot />
                        <Pills items={["ETN", "1 minute", "Candle", "+ Add Indicator"]} widths={[149, 89, 79, 115]} />
                        <Title>Chart</Title>
                        <WinControls />
                    </TitleBar>
                    <Body><Chart1 /><Toolbar active={1} left={10} /></Body>
                </Win>
                <Level2Window />
                <TimeSales />
                <Win $w={400} $pad={2}>
                    <TitleBar>
                        <Title>Chart</Title>
                        <WinControls />
                    </TitleBar>
                    <TitleBar $h={24}>
                        <Dot $off $ml={4} $mr={4} />
                        <Pills clip items={["SPY~US", "5 minutes", "Candle", "+ Add Indicator"]} widths={[149, 89, 79, 115]} />
                    </TitleBar>
                    <Body><Chart4 /><Toolbar active={1} left={8} /></Body>
                </Win>
            </Row>
            <Row $h={488}>
                <Win $w={760}>
                    <TitleBar $h={34}>
                        <Dot />
                        <Pills items={["ETN", "Day", "Bar", "+ Add Indicator"]} widths={[149, 89, 79, 115]} />
                        <Title>Chart</Title>
                        <WinControls />
                    </TitleBar>
                    <Body><Chart2 /><Toolbar active={2} left={10} /></Body>
                </Win>
                <Win $w={440} $pad={2}>
                    <TitleBar $h={33}>
                        <Title>Chart</Title>
                        <WinControls />
                    </TitleBar>
                    <TitleBar $h={25}>
                        <Dot $ml={4} $mr={4} />
                        <Pills bareLast items={["ETN", "5 minutes", "Candle", "+ Add Indicator"]} widths={[149, 89, 79, 100]} />
                    </TitleBar>
                    <Body><Chart3 /><Toolbar active={1} left={8} /></Body>
                </Win>
                <Positions />
                <DesktopArea />
            </Row>
        </Page>
    );
}
